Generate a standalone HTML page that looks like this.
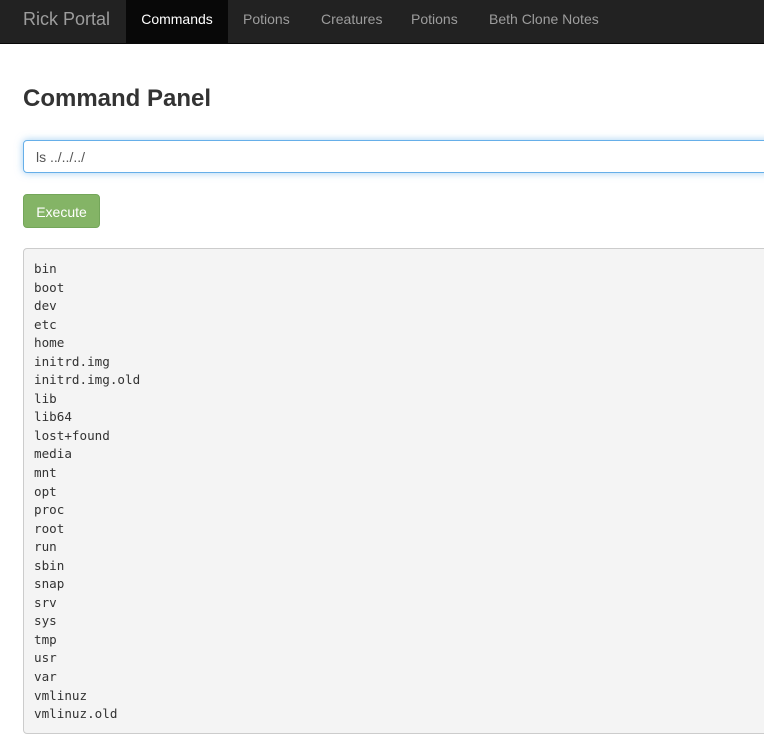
<!DOCTYPE html>
<html><head><meta charset="utf-8"><style>
html,body{margin:0;padding:0;width:764px;height:750px;overflow:hidden;background:#fff;font-family:"Liberation Sans",Arial,sans-serif;color:#333}
.nav{position:absolute;left:0;top:0;width:764px;height:43px;background:#222;border-bottom:1px solid #080808}
.nav span{position:absolute;top:0;height:43px;line-height:39px;font-size:14px;color:#9d9d9d}
.brand{left:23px;font-size:18px!important;}
.active{background:#080808;color:#fff!important;}
h1{position:absolute;left:23px;top:85px;margin:0;font-size:24px;font-weight:bold;line-height:28px;color:#333;-webkit-text-stroke:0}
.input{position:absolute;left:23px;top:140px;width:800px;height:33px;border:1px solid #66afe9;border-radius:4px;box-shadow:0 0 8px rgba(102,175,233,.6);box-sizing:border-box;font-size:14px;line-height:33px;padding-left:12px;color:#555}
.btn{position:absolute;left:23px;top:194px;width:77px;height:34px;background:#84b466;border:1px solid #74a65a;border-radius:4px;box-sizing:border-box;color:#fff;font-size:14px;line-height:34px;text-align:center}
pre{position:absolute;left:23px;top:248px;width:800px;height:486px;box-sizing:border-box;margin:0;background:#f4f4f4;border:1px solid #ccc;border-radius:4px;padding:11px 10px;font-family:"DejaVu Sans Mono","Liberation Mono",monospace;font-size:12.6px;line-height:18.54px;color:#333}
</style></head><body>
<div class="nav">
<span class="brand" style="font-size:18px">Rick Portal</span>
<span class="active" style="left:126px;width:102px;text-align:center">Commands</span>
<span style="left:243px">Potions</span>
<span style="left:321px">Creatures</span>
<span style="left:411px">Potions</span>
<span style="left:489px">Beth Clone Notes</span>
</div>
<h1>Command Panel</h1>
<div class="input">ls ../../../</div>
<div class="btn">Execute</div>
<pre>bin
boot
dev
etc
home
initrd.img
initrd.img.old
lib
lib64
lost+found
media
mnt
opt
proc
root
run
sbin
snap
srv
sys
tmp
usr
var
vmlinuz
vmlinuz.old</pre>
</body></html>
